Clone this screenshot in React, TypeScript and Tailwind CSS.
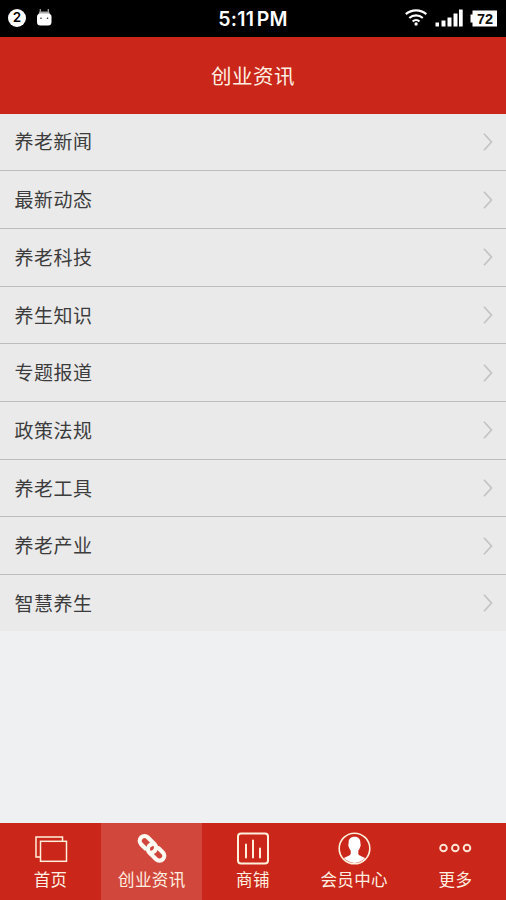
import { ReactNode } from "react"

interface TabItemProps {
    label: string
    icon: ReactNode
    active?: boolean
}

// list entries
const categories = [
    "养老新闻", "最新动态", "养老科技", "养生知识", "专题报道",
    "政策法规", "养老工具", "养老产业", "智慧养生"
]

// windows icon
const HomeIcon = () => (
    <svg width="34" height="34" viewBox="0 0 34 34" fill="none" stroke="#fff0dc" strokeWidth="1.5">
        <path d="M6 25H2V5H28.5v4" />
        <rect x="6.5" y="9.3" width="26" height="20" />
    </svg>
)

// chain icon
const LinkIcon = () => (
    <svg width="34" height="34" viewBox="0 0 34 34" fill="none" stroke="#fffaf2" strokeWidth="4.2" strokeLinecap="round">
        <g transform="translate(17 16.3) rotate(45)">
            <path d="M-4.6 4.8H-10.6a4.8 4.8 0 0 1 0-9.6H-1a4.8 4.8 0 0 1 4.8 4.800q0 1.200-.6 2" />
            <path d="M4.600-4.800H10.600a4.800 4.800 0 0 1 0 9.600H1a4.800 4.800 0 0 1-4.800-4.800q0-1.200.6-2" />
        </g>
    </svg>
)

// chart icon
const ShopIcon = () => (
    <svg width="34" height="34" viewBox="0 0 34 34" fill="none" stroke="#fff0dc" strokeWidth="2">
        <rect x="2" y="1.5" width="30" height="30" rx="3" />
        <path d="M10 12.5v13M17 8.5v17M24 16.5v9" strokeLinecap="round" />
    </svg>
)

// member icon
const MemberIcon = () => (
    <svg width="34" height="34" viewBox="0 0 34 34">
        <circle cx="17.5" cy="16.5" r="15.3" fill="none" stroke="#fff0dc" strokeWidth="1.6" />
        <path transform="translate(.5 -.5)" fill="#fff" d="M17 5.2c4 0 6 2.4 5.900 6.100 0 1.200.3 1.500.3 2.500s-.6 1.700-.9 2.600c-.4 1.200-.9 2-1.500 2.800v3.200c.5 1.800 4.100 2.300 6.800 4.200A14.500 14.500 0 0 1 17 31.500 14.500 14.500 0 0 1 6.400 26.600c2.700-1.900 6.300-2.400 6.800-4.200v-3.200c-.6-.8-1.100-1.600-1.500-2.800-.3-.9-.9-1.600-.9-2.600s.3-1.300.3-2.500c-.1-3.700 1.900-6.100 5.900-6.100z" />
    </svg>
)

// more icon
const MoreIcon = () => (
    <svg width="34" height="34" viewBox="0 0 34 34" fill="none" stroke="#ffe6d6" strokeWidth="1.9">
        <circle cx="5.5" cy="16" r="3.3" />
        <circle cx="17.3" cy="16" r="3.3" />
        <circle cx="29" cy="16" r="3.3" />
    </svg>
)

// status bar
const StatusBar = () => (
    <div className="relative flex justify-between items-center h-[37px] w-full bg-black px-2 text-white">
        <div className="flex items-center gap-[11px] -mt-0.5">
            <div className="flex justify-center items-center h-[18px] w-[18px] rounded-full bg-white text-black text-[13.5px] leading-none font-semibold pt-px font-['Inter',sans-serif]">
                2
            </div>
            <svg width="15" height="18" viewBox="0 0 15 18">
                <path d="M3.3 0v4M11.3 0v4" stroke="#aaa" strokeWidth="1.2" />
                <path d="M2.5 2.5h9.5l1 3h-11.5z" fill="#aaa" />
                <rect x="0" y="4.5" width="14.5" height="12" rx="3.5" fill="#fff" />
                <circle cx="4" cy="9.3" r=".8" fill="#222" />
                <circle cx="10.5" cy="9.3" r=".8" fill="#222" />
            </svg>
        </div>
        <div className="absolute inset-x-0 top-0 flex justify-center items-center h-[39px] text-[19.5px] font-semibold font-['Inter',sans-serif] tracking-[0.2px] [word-spacing:-2.5px]">
            5:11 PM
        </div>
        <div className="flex items-center">
            <svg width="94" height="20" viewBox="-2 0 94 20" className="-mt-0.5">
                <g fill="none" stroke="#fff" strokeWidth="2.2">
                    <path d="M-.2 6.2a15.5 15.5 0 0 1 20.5 0" />
                    <path d="M3.3 10a10 10 0 0 1 13.5 0" />
                    <path d="M6.7 13.5a5 5 0 0 1 6.8 0" />
                </g>
                <circle cx="10.1" cy="16" r="1.7" fill="#fff" />
                <path fill="#fff" d="M29.5 14.5h3.500v4h-3.500zM35.500 12.500h4v6h-4zM41.500 9.500h4v9h-4zM47.500 5.500h4v13h-4zM53 1.500h3.700v17h-3.700z" />
                <path fill="#fff" d="M66.5 2.5H91v16H66.500v-4H64.500V6.500h2z" />
                <text x="79" y="15.5" textAnchor="middle" fontFamily="Liberation Sans" fontSize="14.5" fontWeight="700" fill="#111">72</text>
            </svg>
        </div>
    </div>
)

// bottom tab
const TabItem = ({ label, icon, active }: TabItemProps) => (
    <div className={`flex flex-col items-center h-full flex-1 pt-[9px] ${active ? "bg-[#d1473b]" : ""}`}>
        {icon}
        <div className="mt-[3px] text-[16.5px] leading-[22px] tracking-[0.4px] text-[#fff0e2] whitespace-nowrap">
            {label}
        </div>
    </div>
)

// render elements
const App = () => (
    <div
        lang="zh-CN"
        className="flex flex-col h-[900px] w-[506px] overflow-hidden bg-[#eff0f2] font-['Liberation_Sans','Noto_Sans_CJK_SC',sans-serif]"
    >
        <StatusBar />
        <div className="flex justify-center items-center h-[76.6px] bg-[#ca261a] pt-[5px] text-[20.5px] tracking-[0.5px] text-[#fff0e2]">
            创业资讯
        </div>
        <div className="flex flex-col">
            {
                categories.map((item, index) => (
                    <div
                        className="flex justify-between items-center h-[57.7px] last:h-[56px] bg-[#eaeaea] border-b border-[#bdbdbd] last:border-b-0 pl-[14.5px] pr-[13px] text-[19px] tracking-[0.5px] text-[#3c3c3c]"
                        key={index}
                    >
                        <span className="pt-[3.6px]">{item}</span>
                        <svg width="11" height="20" viewBox="0 0 11 20" fill="none" stroke="#c3c3c3" strokeWidth="1.7">
                            <path d="M2 1.8l7.5 8.2-7.5 8.2" />
                        </svg>
                    </div>
                ))
            }
        </div>
        <div className="flex mt-auto h-[77px] w-full bg-[#ca261a]">
            <TabItem label="首页" icon={<HomeIcon />} />
            <TabItem label="创业资讯" icon={<LinkIcon />} active />
            <TabItem label="商铺" icon={<ShopIcon />} />
            <TabItem label="会员中心" icon={<MemberIcon />} />
            <TabItem label="更多" icon={<MoreIcon />} />
        </div>
    </div>
)

export default App
